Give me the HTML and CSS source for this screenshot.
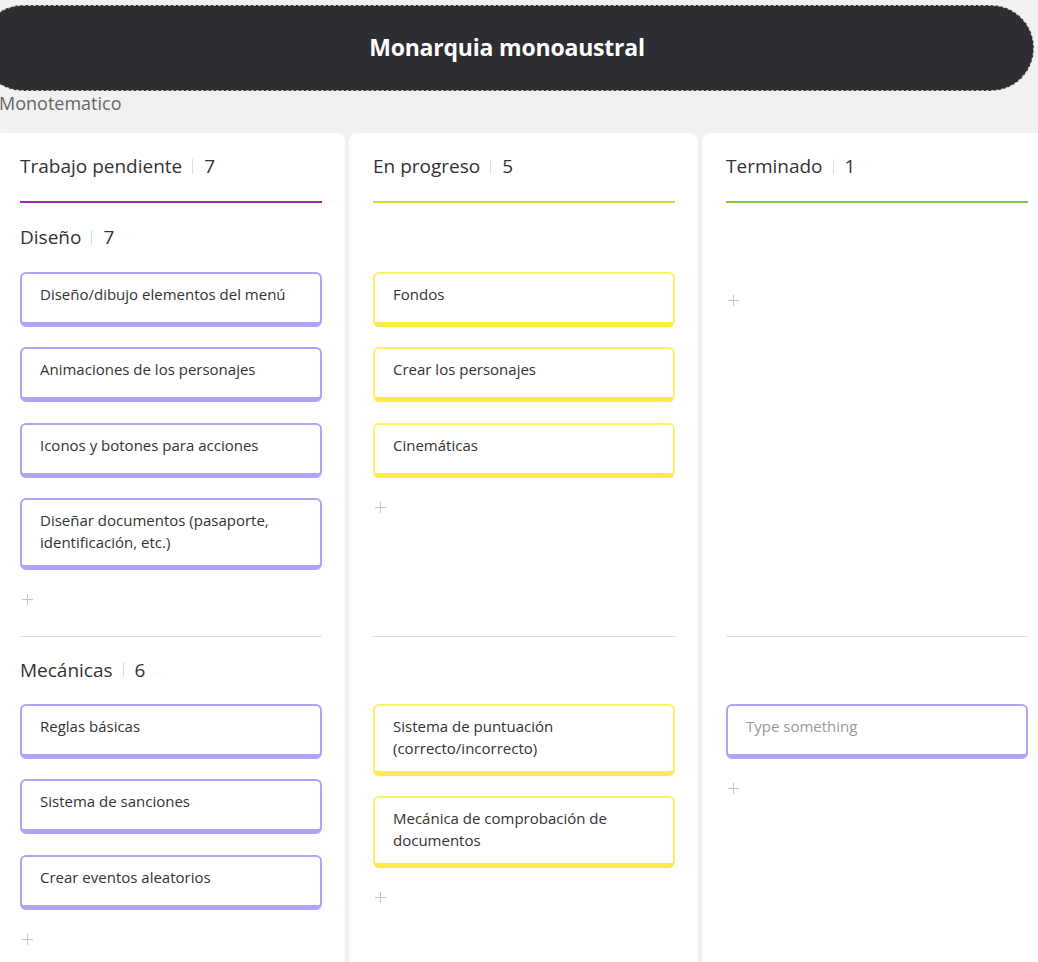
FILE: index.html
```html
<!DOCTYPE html>
<html lang="es">
<head>
<meta charset="utf-8">
<title>Monarquia monoaustral</title>
<link rel="stylesheet" href="styles.css">
</head>
<body>
<header class="topbar"><h1 class="topbar-title">Monarquia monoaustral</h1></header>
<div class="subtitle">Monotematico</div>
<main class="board">
  <div class="col-head"><div class="title">Trabajo pendiente<span class="sep"></span>7</div><div class="bar bar-purple"></div></div>
  <div class="col-head"><div class="title">En progreso<span class="sep"></span>5</div><div class="bar bar-lime"></div></div>
  <div class="col-head"><div class="title">Terminado<span class="sep"></span>1</div><div class="bar bar-green"></div></div>

  <div class="lane">
    <div class="lane-title">Diseño<span class="sep"></span>7</div>
    <div class="cards">
      <div class="card purple">Diseño/dibujo elementos del menú</div>
      <div class="card purple">Animaciones de los personajes</div>
      <div class="card purple">Iconos y botones para acciones</div>
      <div class="card purple">Diseñar documentos (pasaporte, identificación, etc.)</div>
    </div>
    <div class="add"><svg width="11" height="11" viewBox="0 0 11 11"><path d="M5.5 0V11M0 5.5H11" stroke="#c4c4c4" stroke-width="1"/></svg></div>
  </div>
  <div class="lane">
    <div class="lane-title"></div>
    <div class="cards">
      <div class="card yellow">Fondos</div>
      <div class="card yellow">Crear los personajes</div>
      <div class="card yellow">Cinemáticas</div>
    </div>
    <div class="add"><svg width="11" height="11" viewBox="0 0 11 11"><path d="M5.5 0V11M0 5.5H11" stroke="#c4c4c4" stroke-width="1"/></svg></div>
  </div>
  <div class="lane">
    <div class="lane-title"></div>
    <div class="cards empty"></div>
    <div class="add"><svg width="11" height="11" viewBox="0 0 11 11"><path d="M5.5 0V11M0 5.5H11" stroke="#c4c4c4" stroke-width="1"/></svg></div>
  </div>

  <div class="lane divided">
    <div class="lane-title">Mecánicas<span class="sep"></span>6</div>
    <div class="cards">
      <div class="card purple">Reglas básicas</div>
      <div class="card purple">Sistema de sanciones</div>
      <div class="card purple">Crear eventos aleatorios</div>
    </div>
    <div class="add"><svg width="11" height="11" viewBox="0 0 11 11"><path d="M5.5 0V11M0 5.5H11" stroke="#c4c4c4" stroke-width="1"/></svg></div>
  </div>
  <div class="lane divided">
    <div class="lane-title"></div>
    <div class="cards">
      <div class="card yellow">Sistema de puntuación (correcto/incorrecto)</div>
      <div class="card yellow">Mecánica de comprobación de documentos</div>
    </div>
    <div class="add"><svg width="11" height="11" viewBox="0 0 11 11"><path d="M5.5 0V11M0 5.5H11" stroke="#c4c4c4" stroke-width="1"/></svg></div>
  </div>
  <div class="lane divided">
    <div class="lane-title"></div>
    <div class="cards">
      <div class="card purple placeholder">Type something</div>
    </div>
    <div class="add"><svg width="11" height="11" viewBox="0 0 11 11"><path d="M5.5 0V11M0 5.5H11" stroke="#c4c4c4" stroke-width="1"/></svg></div>
  </div>
</main>
</body>
</html>
```
FILE: styles.css
```css
* { box-sizing: border-box; }
html, body { margin: 0; padding: 0; }
body {
  background: #f1f1f1;
  font-family: "Open Sans", "Noto Sans", sans-serif;
  color: #333;
  overflow: hidden;
  width: 1038px;
  height: 962px;
}
.topbar {
  margin: 5px 0 0 -20px;
  width: 1054px;
  height: 86px;
  background: #2d2e33;
  border: 1px dashed #b9b9b9;
  border-radius: 43px;
  display: flex;
  align-items: center;
  justify-content: center;
}
.topbar-title {
  margin: 0 0 2px 0;
  color: #fff;
  font-size: 23px;
  font-weight: 700;
  letter-spacing: -0.2px;
}
.subtitle {
  margin-left: -1px;
  font-size: 18px;
  line-height: 25px;
  color: #666;
  height: 42px;
}
.board {
  margin-left: -4px;
  display: grid;
  grid-template-columns: 349px 349px 349px;
  column-gap: 4px;
}
.col-head {
  background: #fff;
  border-radius: 8px 8px 0 0;
  padding: 20px 23px 0 24px;
}
.title, .lane-title {
  font-size: 19px;
  line-height: 26px;
  color: #333;
  display: flex;
  align-items: center;
}
.sep {
  display: inline-block;
  width: 1px;
  height: 15px;
  background: #dcdcdc;
  margin: 0 11px 0 10px;
}
.bar { height: 2px; margin-top: 22px; }
.bar-purple { background: #9c27b0; }
.bar-lime { background: #cddc39; }
.bar-green { background: #8bc34a; }

.lane {
  background: #fff;
  padding: 0 23px 31px 24px;
  display: flex;
  flex-direction: column;
}
.lane-title { padding-top: 21px; height: 47px; }
.lane.divided .lane-title { border-top: 1px solid #dedede; padding-top: 20px; height: 47px; }
.cards {
  margin-top: 22px;
  display: flex;
  flex-direction: column;
  gap: 20.33px;
}
.lane.divided .cards { margin-top: 21px; }
.cards.empty { margin-top: 21px; }
.card {
  min-height: 55px;
  border: 2px solid;
  border-bottom-width: 5px;
  border-radius: 6px;
  padding: 9px 18px 12px 18px;
  font-size: 15px;
  line-height: 22px;
  color: #333;
  background: #fff;
}
.card.purple { border-color: #ada4f6; }
.card.yellow { border-color: #fbf06b; border-bottom-color: #fdec45; }
.card.placeholder { color: #999; }
.add {
  margin-top: 24px;
  height: 11px;
  padding-left: 2px;
  display: flex;
}
.add svg { display: block; }
```
